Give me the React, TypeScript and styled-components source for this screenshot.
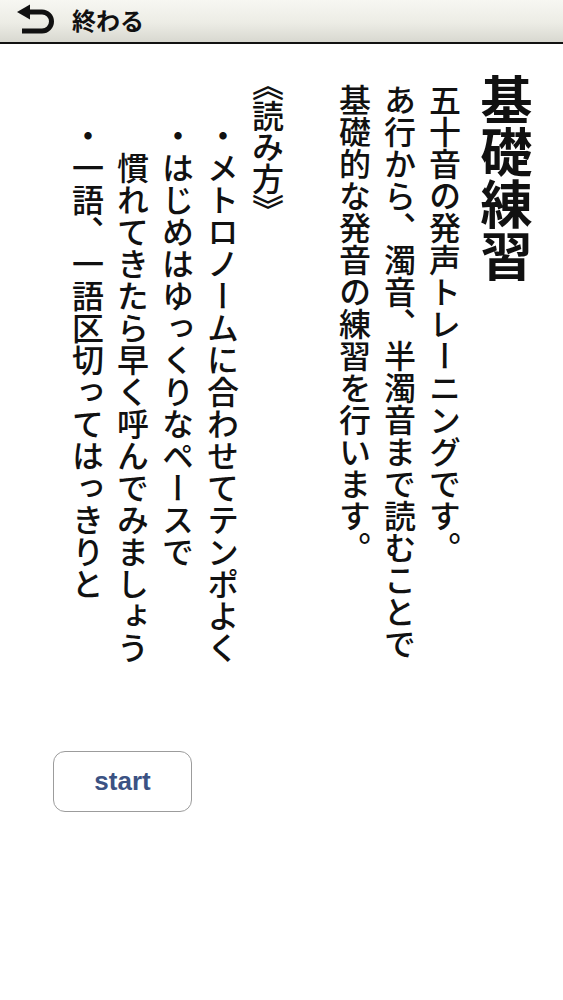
import React from 'react';
import styled, { createGlobalStyle } from 'styled-components';

const GlobalStyle = createGlobalStyle`
  html, body {
    margin: 0;
    padding: 0;
    background: #fff;
  }
  body {
    font-family: "Noto Sans CJK JP", sans-serif;
    color: #111;
  }
  * {
    box-sizing: border-box;
  }
`;

let Screen = styled('div')`
  width: 563px;
  height: 1000px;
  display: flex;
  flex-direction: column;
  background: #fff;
`;

let TopBar = styled('header')`
  height: 44px;
  flex-shrink: 0;
  display: flex;
  align-items: center;
  gap: 16px;
  padding: 0 0 2px 16px;
  border-bottom: 2px solid #111;
  background: linear-gradient(#f7f7f2 0%, #ececE5 55%, #d8d8d0 100%);
`;

let BackIcon = styled('svg')`
  width: 40px;
  height: 32px;
  flex-shrink: 0;
`;

let BarTitle = styled('span')`
  font-size: 24px;
  line-height: 1;
  font-weight: 700;
  color: #111;
`;

let Vertical = styled('section')`
  writing-mode: vertical-rl;
  width: 100%;
  height: 670px;
  padding: 30px 27px 0 0;
  white-space: nowrap;
`;

let Title = styled('h1')`
  margin: 0;
  font-size: 52px;
  line-height: 60px;
  font-weight: 700;
`;

let Lead = styled('p')`
  margin: 0;
  margin-block-start: 9px;
  margin-inline-start: 10px;
  font-size: 32px;
  line-height: 45px;
  font-weight: 500;
`;

let SubHead = styled('h2')`
  margin: 0;
  margin-block-start: 42px;
  margin-inline-start: 10px;
  font-size: 32px;
  line-height: 45px;
  font-weight: 500;
  font-feature-settings: 'vpal';
`;

let Steps = styled('ul')`
  margin: 0;
  margin-inline-start: 46px;
  padding: 0;
  list-style: none;
`;

let Step = styled('li')`
  font-size: 32px;
  line-height: 45px;
  font-weight: 500;
  padding-inline-start: 32px;
  text-indent: -32px;
`;

let StartButton = styled('button')`
  margin: 37px 0 0 53px;
  width: 139px;
  height: 61px;
  border: 1.5px solid #9c9c9c;
  border-radius: 12px;
  background: #fff;
  font-family: 'Liberation Sans', Arial, sans-serif;
  font-size: 26px;
  font-weight: 700;
  color: #3b5283;
  cursor: pointer;
`;

export default function App() {
  return (
    <>
      <GlobalStyle />
      <Screen>
        <TopBar>
          <BackIcon viewBox="0 0 40 32">
            <polygon points="1,8 14,0.5 14,15.5" fill="#111" />
            <path d="M12 8 H26 A9.5 9.5 0 0 1 26 27 H6" fill="none" stroke="#111" strokeWidth="5" />
          </BackIcon>
          <BarTitle>終わる</BarTitle>
        </TopBar>

        <Vertical>
          <Title>基礎練習</Title>
          <Lead>
            五十音の発声トレーニングです。
            <br />
            あ行から、濁音、半濁音まで読むことで
            <br />
            基礎的な発音の練習を行います。
          </Lead>
          <SubHead>《読み方》</SubHead>
          <Steps>
            <Step>・メトロノームに合わせてテンポよく</Step>
            <Step>
              ・はじめはゆっくりなペースで
              <br />
              慣れてきたら早く呼んでみましょう
            </Step>
            <Step>・一語、一語区切ってはっきりと</Step>
          </Steps>
        </Vertical>

        <StartButton>start</StartButton>
      </Screen>
    </>
  );
}
